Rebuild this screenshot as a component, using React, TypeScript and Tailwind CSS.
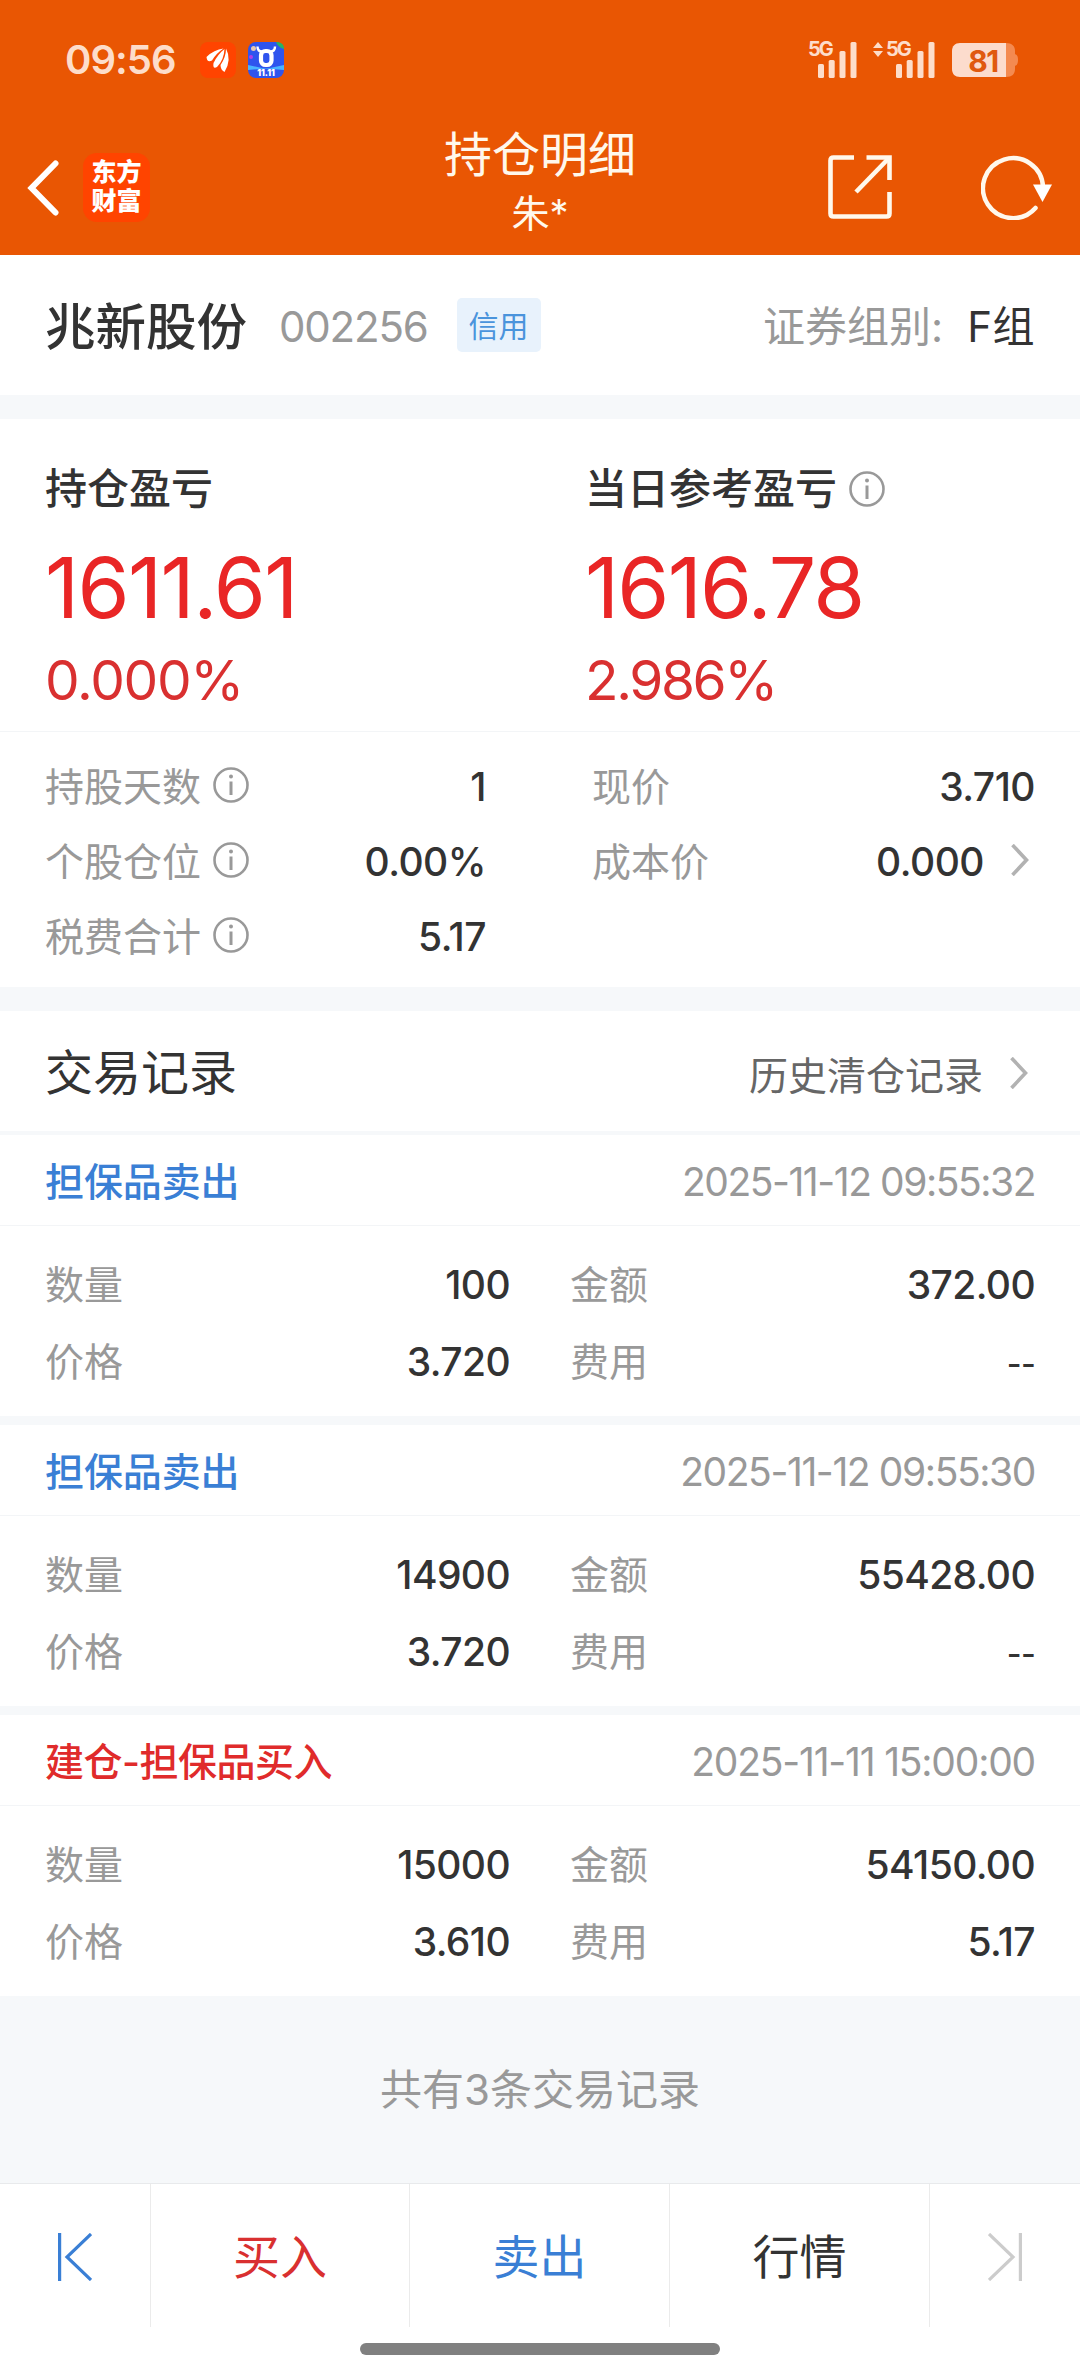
import type { ReactNode } from 'react';

interface TradeRecord {
  id: number;
  title: string;
  side: 'buy' | 'sell';
  time: string;
  timeClass: string;
  quantity: string;
  amount: string;
  price: string;
  fee: string;
}

const records: TradeRecord[] = [
  {
    id: 1,
    title: '担保品卖出',
    side: 'sell',
    time: '2025-11-12 09:55:32',
    timeClass: 'tracking-[-1.45px]',
    quantity: '100',
    amount: '372.00',
    price: '3.720',
    fee: '--',
  },
  {
    id: 2,
    title: '担保品卖出',
    side: 'sell',
    time: '2025-11-12 09:55:30',
    timeClass: 'tracking-[-1.4px]',
    quantity: '14900',
    amount: '55428.00',
    price: '3.720',
    fee: '--',
  },
  {
    id: 3,
    title: '建仓-担保品买入',
    side: 'buy',
    time: '2025-11-11 15:00:00',
    timeClass: 'tracking-[-1.2px]',
    quantity: '15000',
    amount: '54150.00',
    price: '3.610',
    fee: '5.17',
  },
];

const InfoIcon = () => (
  <svg className="h-9 w-9 shrink-0" viewBox="0 0 36 36" fill="none" stroke="#999" strokeWidth="2.6">
    <circle cx="18" cy="18" r="16.5" />
    <path d="M18 14.5V28" strokeWidth="3" />
    <circle cx="18" cy="9.5" r="2" fill="#999" stroke="none" />
  </svg>
);

const ChevronRight = () => (
  <svg className="h-8 w-[18px] shrink-0" viewBox="0 0 18 32" fill="none" stroke="#b2b2b2" strokeWidth="3.6">
    <path d="M1.5 1L15.5 16L1.5 31" />
  </svg>
);

const SignalBars = () => (
  <svg className="h-9 w-[39px]" viewBox="0 0 39 36" fill="#fdddca">
    <rect x="0" y="22" width="6" height="14" rx="1.5" />
    <rect x="10.7" y="18" width="6" height="18" rx="1.5" />
    <rect x="21.5" y="9" width="6" height="27" rx="1.5" />
    <rect x="32.5" y="0" width="6" height="36" rx="1.5" />
  </svg>
);

const StatusBar = () => (
  <div className="flex h-[116px] items-center pl-[65px] pr-[62px] pt-1">
    <span className="w-[111px] text-[40px] font-semibold leading-none tracking-[-1px] text-[#fdddca]">09:56</span>
    <svg className="ml-6 h-9 w-9" viewBox="0 0 36 36">
      <rect width="36" height="36" rx="8" fill="#ff4400" />
      <g fill="#fff">
        <path d="M6.500 15Q14 7.500 23.500 6.500Q16 11.500 12 18.500Q7 21 6.500 15Z" />
        <path d="M13.500 21Q18 12 24.500 7Q24 18 17 25Q12.500 27.500 13.500 21Z" />
        <path d="M20.500 23Q26 15 26 6.500Q32 18 24.500 30Q20.500 28 20.500 23Z" />
      </g>
    </svg>
    <svg className="ml-3 h-9 w-9" viewBox="0 0 36 36">
      <rect width="36" height="36" rx="8" fill="#2f54ee" />
      <path d="M0 23L14 26H22L36 23V28L18 26.500L0 28Z" fill="#49b4ff" />
      <path d="M28 0C35 0 36 4 36 7C32 6 29 3 28 0Z" fill="#28b463" />
      <circle cx="5.5" cy="6.5" r="2.5" fill="#e8c9b0" />
      <circle cx="3" cy="15" r="2" fill="#b23ee8" />
      <rect x="13" y="9" width="10.500" height="14" rx="4.500" fill="none" stroke="#fff" strokeWidth="4.200" />
      <path d="M9.500 4.500C9.500 8 11 9.500 14 9.500M27 4.500C27 8 25.500 9.500 22.500 9.500" fill="none" stroke="#fff" strokeWidth="2.400" />
      <text x="18" y="34.300" textAnchor="middle" fontSize="8.500" fontWeight="900" fill="#fff">11.11</text>
    </svg>
    <div className="ml-auto flex h-9 items-center">
      <div className="relative flex h-9 w-[49px] justify-end">
        <span className="absolute left-0 -top-px text-[20px] font-bold leading-[16px] tracking-[-2px] text-[#fdddca]">5G</span>
        <SignalBars />
      </div>
      <div className="relative ml-4 flex h-9 w-[62px] justify-end">
        <svg className="absolute left-0 top-0 h-[15px] w-[10px]" viewBox="0 0 10 15" fill="#fdddca">
          <path d="M5 0L10 6H0ZM5 15L10 9H0Z" />
        </svg>
        <span className="absolute left-[13px] -top-px text-[20px] font-bold leading-[16px] tracking-[-2px] text-[#fdddca]">5G</span>
        <SignalBars />
      </div>
      <div className="relative ml-[17px] flex h-[34px] w-[66px] items-center">
        <svg className="absolute inset-0 h-[34px] w-[66px]" viewBox="0 0 66 34">
          <path d="M54 0C60 0 63 3 63 8V11C65 12 66 13 66 17C66 21 65 22 63 23V26C63 31 60 34 54 34Z" fill="#f48a50" />
          <path d="M8 0H54V34H8C3 34 0 31 0 26V8C0 3 3 0 8 0Z" fill="#fcdccd" />
        </svg>
        <span className="relative w-[62px] pt-px text-center text-[30px] font-bold leading-none tracking-[-1.5px] text-[#e0590f]">81</span>
      </div>
    </div>
  </div>
);

const TitleBar = () => (
  <div className="flex h-[139px] items-start px-[27px] text-[#fff8ec]">
    <div className="flex w-[280px] items-center pt-[37px]">
      <svg className="h-[56px] w-8" viewBox="0 0 32 56" fill="none" stroke="#fff" strokeWidth="6" strokeLinecap="round" strokeLinejoin="miter">
        <path d="M28.5 3.5L4.5 28L28.5 52.5" />
      </svg>
      <div className="ml-6 flex h-[69px] w-[67px] items-center justify-center rounded-[14px] bg-[#ff4400] text-center text-[25px] font-black leading-[29px] text-white">
        <span className="w-[52px] pb-0.5">东方财富</span>
      </div>
    </div>
    <div className="flex flex-1 flex-col items-center pt-[13px]">
      <h1 className="text-[48px] leading-[52px]">持仓明细</h1>
      <p className="pt-2 text-[38px] leading-[48px]">朱*</p>
    </div>
    <div className="flex w-[280px] items-center justify-end pt-[38px]">
      <svg className="h-16 w-16" viewBox="0 0 64 64" fill="none" stroke="#fff8ec" strokeWidth="4.6">
        <path d="M26 2.5H5.5Q2.5 2.5 2.5 5.5V58.5Q2.5 61.5 5.5 61.5H58.5Q61.5 61.5 61.5 58.5V37" />
        <path d="M38.500 2.5H61.5V25" />
        <path d="M61 3L28 37" />
      </svg>
      <svg className="ml-[89px] h-[66px] w-[72px]" viewBox="0 0 72 66">
        <path d="M54.500 54A30 30 0 1 1 62 33" fill="none" stroke="#fff8ec" strokeWidth="4.500" strokeLinecap="round" />
        <path d="M52 30.500H71L61.500 48Z" fill="#fff" />
      </svg>
    </div>
  </div>
);

interface DetailRowProps {
  label: string;
  value?: string;
  info?: boolean;
  link?: boolean;
}

const DetailRow = ({ label, value, info, link }: DetailRowProps) => (
  <div className="flex h-[75px] items-center">
    <span className="text-[39px] text-[#999]">{label}</span>
    {info && (
      <span className="ml-3 pb-1">
        <InfoIcon />
      </span>
    )}
    <span className="ml-auto text-[39px] font-medium tracking-[-0.5px]">{value}</span>
    {link && (
      <span className="ml-[27px] mr-[6px] pb-1">
        <ChevronRight />
      </span>
    )}
  </div>
);

const RecordField = ({ label, value }: { label: string; value: string }) => (
  <div className="flex h-[77px] items-center justify-between">
    <span className="text-[39px] text-[#999]">{label}</span>
    {value === '--' ? (
      <span className="pt-1 text-[32px] font-medium tracking-[-0.7px]">--</span>
    ) : (
      <span className="text-[39px] font-medium tracking-[-0.6px]">{value}</span>
    )}
  </div>
);

const RecordCard = ({ record }: { record: TradeRecord }) => (
  <section className="h-[281px] bg-white">
    <div className="flex h-[91px] items-center justify-between border-b border-[#f3f5f7] px-[45px] pt-0.5">
      <span
        className={
          record.side === 'buy'
            ? 'text-[39px] font-medium tracking-[-0.5px] text-[#e02b2b]'
            : 'text-[39px] font-medium tracking-[-0.1px] text-[#3a7fd5]'
        }
      >
        {record.title}
      </span>
      <span className={`text-[39px] text-[#999] ${record.timeClass}`}>{record.time}</span>
    </div>
    <div className="flex px-[45px] pt-5">
      <div className="w-[465px]">
        <RecordField label="数量" value={record.quantity} />
        <RecordField label="价格" value={record.price} />
      </div>
      <div className="ml-[60px] flex-1">
        <RecordField label="金额" value={record.amount} />
        <RecordField label="费用" value={record.fee} />
      </div>
    </div>
  </section>
);

const NavItem = ({ className, children }: { className: string; children: ReactNode }) => (
  <button className={`flex h-[143px] items-center justify-center pt-0.5 ${className}`}>{children}</button>
);

const App = () => {
  return (
    <div className="flex h-[2376px] w-[1080px] flex-col overflow-hidden bg-[#f6f8fa] font-['Inter','Noto_Sans_CJK_SC',sans-serif] leading-none text-[#333]">
      <header className="h-[255px] shrink-0 bg-[#e95603]">
        <StatusBar />
        <TitleBar />
      </header>

      {/* Stock name */}
      <section className="flex h-[140px] shrink-0 items-center bg-white px-[45px] pt-1">
        <span className="text-[50.5px] font-medium">兆新股份</span>
        <span className="ml-8 text-[42px] tracking-[-1.2px] text-[#999]">002256</span>
        <span className="mb-1 ml-[29px] flex h-[54px] w-[84px] items-center justify-center rounded-[5px] bg-[#e8f2fc] pt-px text-[30px] text-[#4a94dc]">信用</span>
        <span className="ml-auto text-[42px] text-[#999]">证券组别:</span>
        <span className="ml-6 text-[42px] tracking-[0.5px]">F组</span>
      </section>

      {/* Profit and loss */}
      <section className="mt-6 shrink-0 bg-white">
        <div className="flex h-[313px] border-b border-[#f3f5f7] pl-[45px] pt-[49px]">
          <div className="w-[540px]">
            <div className="text-[42px] font-medium leading-[42px]">持仓盈亏</div>
            <div className="pt-[36px] text-[84px] leading-[84px] tracking-[-1.6px] text-[#e92626]">1611.61</div>
            <div className="pt-[23px] text-[55px] leading-[54px] tracking-[-1.3px] text-[#d93030]">0.000%</div>
          </div>
          <div>
            <div className="flex items-center text-[42px] font-medium leading-[42px]">
              当日参考盈亏
              <span className="ml-3">
                <InfoIcon />
              </span>
            </div>
            <div className="pt-[36px] text-[84px] leading-[84px] tracking-[-1.8px] text-[#e92626]">1616.78</div>
            <div className="pt-[23px] text-[55px] leading-[54px] tracking-[-2.4px] text-[#d93030]">2.986%</div>
          </div>
        </div>
        <div className="flex h-[255px] px-[45px] pt-[17px]">
          <div className="w-[441px]">
            <DetailRow label="持股天数" value="1" info />
            <DetailRow label="个股仓位" value="0.00%" info />
            <DetailRow label="税费合计" value="5.17" info />
          </div>
          <div className="ml-[106px] flex-1">
            <DetailRow label="现价" value="3.710" />
            <DetailRow label="成本价" value="0.000" link />
          </div>
        </div>
      </section>

      {/* Trade records */}
      <section className="mt-6 flex h-[120px] shrink-0 items-center justify-between bg-white pl-[45px] pr-[52px] pt-[3px]">
        <h2 className="text-[48px]">交易记录</h2>
        <div className="flex items-center">
          <span className="pt-1.5 text-[39px] text-[#666]">历史清仓记录</span>
          <span className="ml-[27px]">
            <ChevronRight />
          </span>
        </div>
      </section>
      <div className="mt-1 flex shrink-0 flex-col gap-[9px]">
        {records.map((record) => (
          <RecordCard key={record.id} record={record} />
        ))}
      </div>

      <p className="flex h-[187px] shrink-0 items-center justify-center text-[42px] text-[#999]">共有3条交易记录</p>

      <nav className="h-[193px] shrink-0 border-t border-[#e8eaec] bg-white">
        <div className="flex divide-x divide-[#ebebeb] text-[47px]">
          <NavItem className="w-[151px]">
            <svg className="h-12 w-[34px]" viewBox="0 0 34 48" fill="none" stroke="#3a7fd5" strokeWidth="3.2">
              <path d="M1.600 0V48M33 1L9 24L33 47" />
            </svg>
          </NavItem>
          <NavItem className="w-[259px] text-[#d93030]">买入</NavItem>
          <NavItem className="w-[260px] text-[#3a7fd5]">卖出</NavItem>
          <NavItem className="w-[260px]">行情</NavItem>
          <NavItem className="w-[150px]">
            <svg className="h-12 w-[34px]" viewBox="0 0 34 48" fill="none" stroke="#ccc" strokeWidth="3.2">
              <path d="M32.400 0V48M1 1L25 24L1 47" />
            </svg>
          </NavItem>
        </div>
        <div className="mx-auto mt-4 h-3 w-[360px] rounded-full bg-[#808080]" />
      </nav>
    </div>
  );
};

export default App;
